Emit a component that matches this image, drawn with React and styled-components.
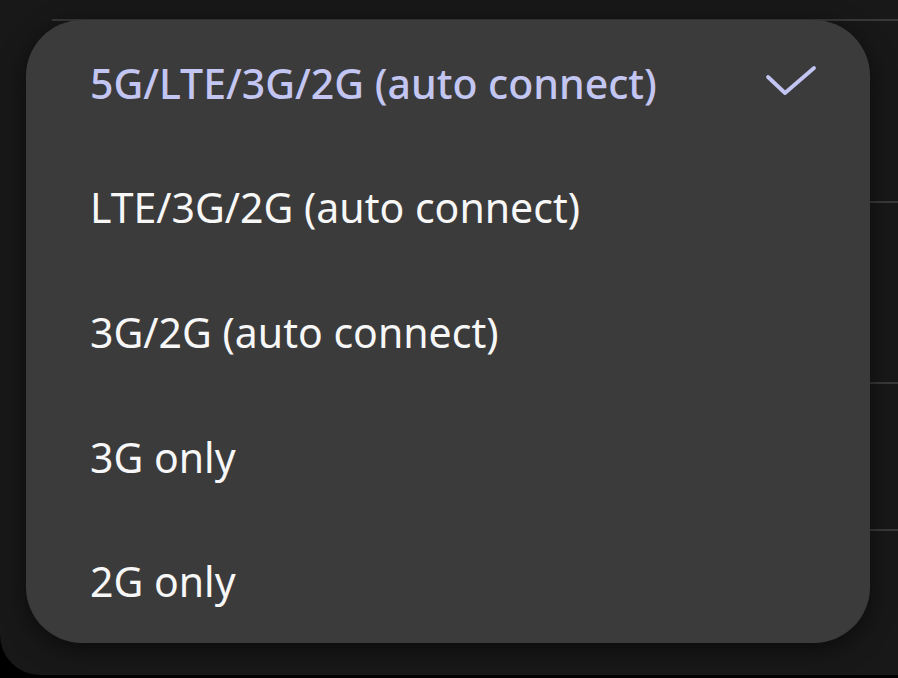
import styled, { createGlobalStyle } from "styled-components";

const GlobalStyle = createGlobalStyle`
  html, body {
    margin: 0;
    padding: 0;
    background: #000;
  }
  body {
    font-family: "Noto Sans", "Open Sans", sans-serif;
    -webkit-font-smoothing: antialiased;
  }
`;

const options = [
  "5G/LTE/3G/2G (auto connect)",
  "LTE/3G/2G (auto connect)",
  "3G/2G (auto connect)",
  "3G only",
  "2G only",
];

const Screen = styled.div`
  position: relative;
  width: 898px;
  height: 678px;
  overflow: hidden;
  background: #000;
`;

const Panel = styled.div`
  display: flex;
  flex-direction: column;
  height: 675px;
  padding-top: 19px;
  box-sizing: border-box;
  background: #181818;
  border-bottom-left-radius: 40px;
`;

const SettingRow = styled.div`
  margin-left: 52px;
  height: ${(p) => p.$h}px;
  border-top: 2px solid #393939;
  box-sizing: border-box;
`;

const Menu = styled.ul`
  position: absolute;
  top: 20px;
  left: 26px;
  width: 844px;
  height: 623px;
  margin: 0;
  padding: 0;
  list-style: none;
  display: flex;
  flex-direction: column;
  background: #3b3b3b;
  border-radius: 56px;
  box-shadow: 0 6px 24px rgba(0, 0, 0, 0.55);
`;

const Option = styled.li`
  flex: 1;
  display: flex;
  align-items: center;
  justify-content: space-between;
  padding: 0 52px 0 64px;
  font-size: 41px;
  line-height: 1;
  color: ${(p) => (p.$selected ? "#c3c6f2" : "#f7f7f7")};
  font-weight: ${(p) => (p.$selected ? 500 : 400)};
`;

const Label = styled.span`
  padding-top: 2px;
`;

const Check = () => (
  <svg width="54" height="34" viewBox="0 0 54 34" fill="none">
    <path
      d="M4 12 L21 28 L50 3"
      stroke="#c3c6f2"
      strokeWidth="3.8"
      strokeLinecap="round"
      strokeLinejoin="round"
    />
  </svg>
);

export default function App() {
  return (
    <>
      <GlobalStyle />
      <Screen>
        <Panel>
          <SettingRow $h={182} />
          <SettingRow $h={181} />
          <SettingRow $h={147} />
          <SettingRow $h={126} />
        </Panel>
        <Menu>
          {options.map((o, i) => (
            <Option key={o} $selected={i === 0}>
              <Label>{o}</Label>
              {i === 0 && <Check />}
            </Option>
          ))}
        </Menu>
      </Screen>
    </>
  );
}
